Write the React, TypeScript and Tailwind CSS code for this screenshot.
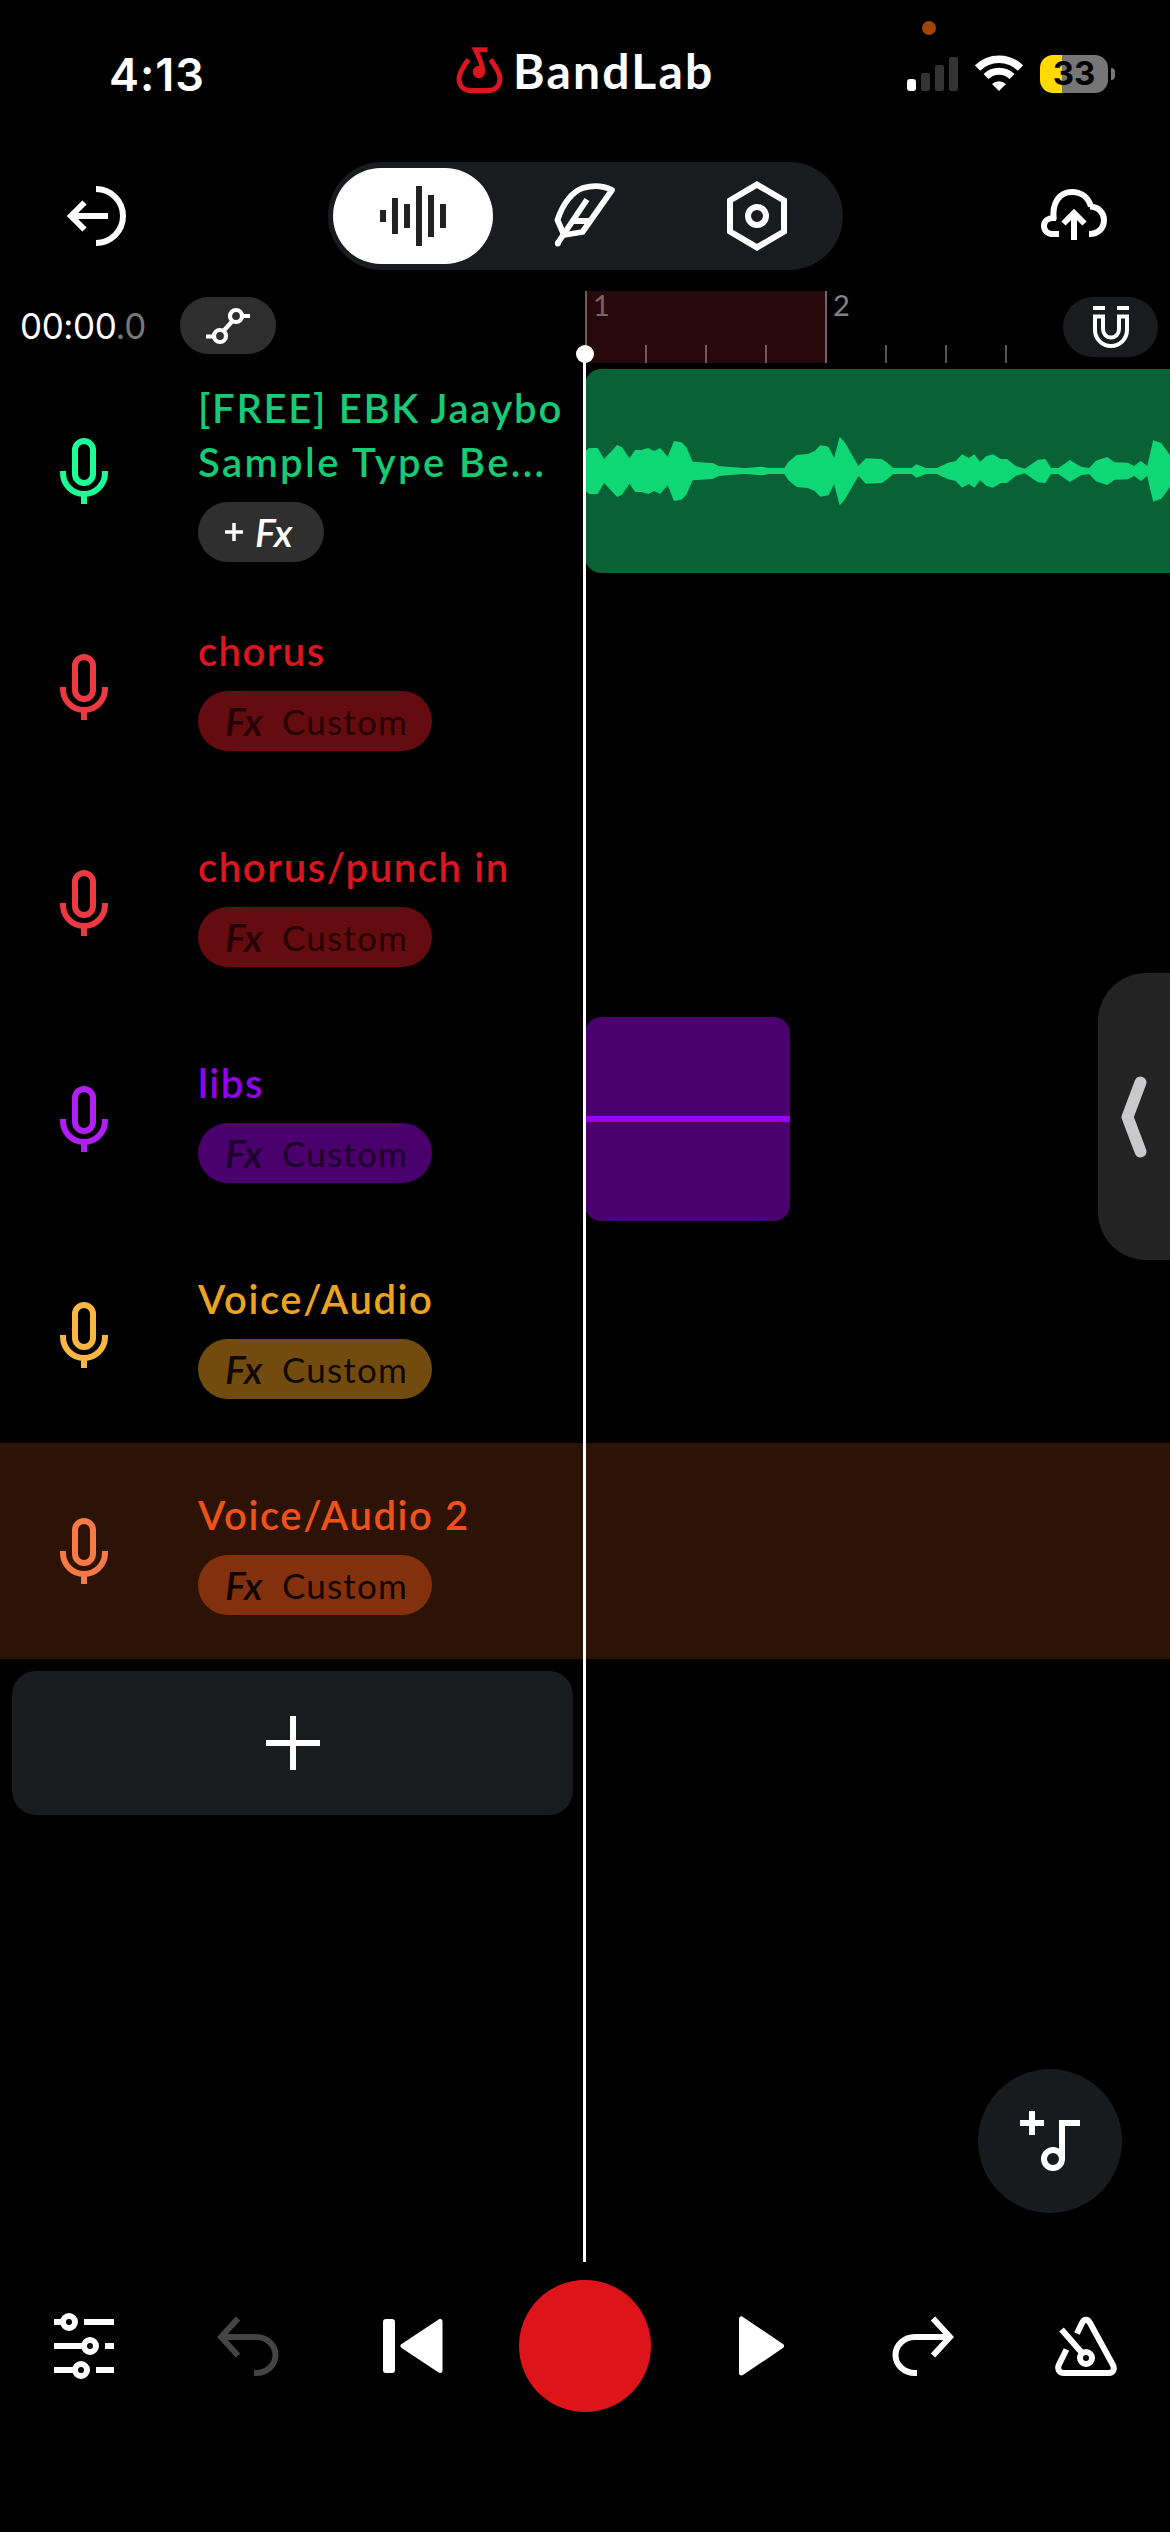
const tracks = [
  { name: "[FREE] EBK Jaaybo", name2: "Sample Type Be...", mic: "text-[#1dff96]", title: "text-[#17ca76] tracking-[1.7px]", fx: null, row: "" },
  { name: "chorus", mic: "text-[#ec3a42]", title: "text-[#dd151f] tracking-[1.4px]", fx: "bg-[#640c10] text-[#250204]", row: "" },
  { name: "chorus/punch in", mic: "text-[#ec3a42]", title: "text-[#dd151f] tracking-[1.6px]", fx: "bg-[#640c10] text-[#250204]", row: "" },
  { name: "libs", mic: "text-[#b01ff8]", title: "text-[#9500f2] tracking-[1.6px]", fx: "bg-[#4a006d] text-[#1b0029]", row: "" },
  { name: "Voice/Audio", mic: "text-[#f9b642]", title: "text-[#eca322] tracking-[1.6px]", fx: "bg-[#724c0e] text-[#120a02]", row: "" },
  { name: "Voice/Audio 2", mic: "text-[#f57a45]", title: "text-[#ee5219] tracking-[1.6px]", fx: "bg-[#83310d] text-[#120501]", row: "bg-[#2c1306]" },
]

// x position and half height of the waveform envelope
const wave = [
  [4, 58], [15, 69], [38, 69], [55, 36], [90, 78], [103, 71], [123, 38], [138, 63], [155, 63], [173, 69], [188, 60], [205, 69],
  [225, 43], [242, 90], [262, 86], [275, 71], [292, 28], [345, 24], [362, 15], [385, 13], [430, 9], [478, 13], [495, 9], [537, 9],
  [548, 28], [570, 48], [600, 51], [618, 60], [633, 77], [655, 73], [670, 40], [685, 103], [700, 83], [735, 15], [755, 38], [797, 36],
  [812, 25], [828, 9], [877, 9], [890, 20], [915, 9], [945, 9], [975, 25], [995, 30], [1012, 50], [1030, 39], [1045, 50], [1060, 28],
  [1078, 45], [1095, 50], [1115, 36], [1132, 36], [1155, 15], [1180, 7], [1215, 34], [1235, 36], [1250, 9], [1270, 9], [1300, 33],
  [1330, 13], [1352, 9], [1370, 31], [1400, 42], [1420, 26], [1455, 25], [1472, 15], [1490, 30], [1507, 15], [1523, 92], [1545, 83], [1568, 48],
]

const wavePoints = [
  ...wave.map(([x, h]) => `${x},${306 - h}`),
  ...[...wave].reverse().map(([x, h]) => `${x},${306 + h}`),
].join(" ")

function StatusBar() {
  return (
    <div className="relative flex h-[162px] items-start">
      <div className="w-[328px] pt-12 pl-[109px] font-[Inter] text-[45px] leading-[54px] font-semibold tracking-[1px]">4:13</div>
      <div className="flex w-[514px] items-start pl-[128px]">
        <svg className="mt-[46px] h-12 w-12 text-[#dd151f]" viewBox="0 0 48 48" fill="none" stroke="currentColor">
          <path d="M12.5 13.5 C7 21 3 27 3 32.500 C3 40 8 44.500 15.500 44.500 H31.500 C39 44.500 44 40 44 32.500 C44 27 40 21 34.500 13.500" strokeWidth="5" />
          <path d="M31.500 3.800 H19.500 C22.500 10 26.500 17 27 27" strokeWidth="5" />
          <circle cx="23" cy="26" r="6.200" fill="currentColor" stroke="none" />
        </svg>
        <div className="ml-[9px] mt-[42px] text-[48px] leading-[58px] font-bold tracking-[2.200px] whitespace-nowrap">BandLab</div>
      </div>
      <div className="flex items-start pl-[65px]">
        <svg className="mt-[55px] h-9 w-[51px]" viewBox="0 0 51 36">
          <rect x="0" y="24" width="9" height="12" rx="3" fill="#fff" />
          <rect x="14" y="18" width="9" height="18" rx="2" fill="#333" />
          <rect x="28" y="10" width="9" height="26" rx="2" fill="#333" />
          <rect x="42" y="2" width="9" height="34" rx="2" fill="#333" />
        </svg>
        <svg className="mt-[55px] ml-[17px] h-9 w-12" viewBox="0 0 48 36" fill="none" stroke="#fff">
          <path d="M2.500 13 A30.500 30.500 0 0 1 45.500 13" strokeWidth="7.500" />
          <path d="M11 21.500 A18.500 18.500 0 0 1 37 21.500" strokeWidth="7" />
          <path d="M17 29 A10 10 0 0 1 31 29 L24 36 Z" fill="#fff" stroke="none" />
        </svg>
        <div className="mt-[55px] ml-[17px] flex h-[38px] w-[68px] items-center justify-center rounded-[13px] bg-linear-to-r from-[#ffd900] from-33% to-[#767676] to-33% font-[Inter] text-[33px] font-bold text-black">33</div>
        <div className="mt-[68px] ml-[3px] h-3 w-1 rounded-r-full bg-[#767676]" />
      </div>
      <div className="absolute top-[21px] left-[922px] h-[14px] w-[14px] rounded-full bg-[#a04408]" />
    </div>
  )
}

function Header() {
  return (
    <div className="flex h-[108px] items-center">
      <svg className="ml-[66px] h-[60px] w-[60px]" viewBox="0 0 60 60" fill="none" stroke="#fff" strokeWidth="6">
        <path d="M30 3 A27 27 0 0 1 30 57" />
        <path d="M42 30 H4 M18.500 16.500 L5 30 L18.500 43.500" />
      </svg>
      <div className="ml-[202px] flex h-[108px] w-[515px] items-center rounded-full bg-[#1a1b1e] pl-[5px]">
        <div className="flex h-24 w-40 items-center justify-center rounded-full bg-white">
          <svg className="h-[60px] w-[66px]" viewBox="0 0 66 60" fill="#222">
            <rect x="0" y="24" width="6" height="12" />
            <rect x="12" y="12" width="6" height="36" />
            <rect x="24" y="18" width="6" height="24" />
            <rect x="36" y="0" width="6" height="60" />
            <rect x="48" y="9" width="6" height="42" />
            <rect x="60" y="18" width="6" height="24" />
          </svg>
        </div>
        <svg className="ml-[61px] h-[66px] w-[62px]" viewBox="0 0 62 66" fill="none" stroke="#fff" strokeWidth="5.800" strokeLinejoin="round">
          <path d="M10 52 L3.500 37 C9 20 19 8 29 5 C39 2.200 50 3 58 7 L28.500 49 Z" />
          <path d="M3.500 60.500 L33 16.500 M19 38 H37" />
          <circle cx="3.800" cy="60.500" r="2.900" fill="#fff" stroke="none" />
        </svg>
        <svg className="ml-[111px] h-[70px] w-[60px]" viewBox="0 0 60 70" fill="none" stroke="#fff" strokeWidth="6">
          <path d="M30 3.600 L57 19.500 V50.500 L30 66.400 L3 50.500 V19.500 Z" />
          <circle cx="30" cy="35" r="9" />
        </svg>
      </div>
      <svg className="ml-[198px] h-[54px] w-[66px]" viewBox="0 0 66 54" fill="none" stroke="#fff" strokeWidth="6">
        <path d="M18 45 H12 C6.500 45 3 41.500 3 37 C3 32 7 29 12.500 29 H15 M12.800 31 C10.500 13 19 3 31 3 C41 3 47.500 9 50 17.500 H49 C58 18 63 24 63 31 C63 39 57.500 45 48 45" />
        <path d="M33 51 V25 M22.500 34.500 L33 24 L43.500 34.500" />
      </svg>
    </div>
  )
}

function Ruler() {
  return (
    <div className="mt-[21px] flex h-[72px]">
      <div className="flex w-[585px] pl-5">
        <div className="mt-1.5 w-40 font-[Inter] text-[35px] leading-[58px] tracking-[-0.4px] whitespace-nowrap">
          00:00<span className="text-[#777]">.0</span>
        </div>
        <div className="mt-1.5 flex h-[57px] w-24 items-center justify-center rounded-full bg-[#2e2e2e]">
          <svg className="h-10 w-11" viewBox="0 0 44 40" fill="none" stroke="#fff" strokeWidth="4.200">
            <circle cx="30" cy="10" r="6" />
            <circle cx="14" cy="30" r="6" />
            <path d="M36 10 H44 M0 30.500 H8 M26.500 15 L17.500 25" />
          </svg>
        </div>
      </div>
      <div className="flex flex-1 items-end">
        <div className="flex h-[72px] w-[240px] items-end border-l-2 border-[#73575a] bg-[#28090b]">
          <div className="w-[58px] self-start pl-1.5 text-[29px] leading-[28px] text-[#7f6365]">1</div>
          <div className="h-[18px] w-[60px] border-l-2 border-[#73575a]" />
          <div className="h-[18px] w-[60px] border-l-2 border-[#73575a]" />
          <div className="h-[18px] border-l-2 border-[#73575a]" />
        </div>
        <div className="flex h-[72px] w-[238px] items-end border-l-2 border-[#6f6567]">
          <div className="w-[58px] self-start pl-1.5 text-[29px] leading-[28px] text-[#848484]">2</div>
          <div className="h-[18px] w-[60px] border-l-2 border-[#555]" />
          <div className="h-[18px] w-[60px] border-l-2 border-[#555]" />
          <div className="h-[18px] border-l-2 border-[#555]" />
        </div>
        <div className="mb-1.5 flex h-[60px] w-[95px] items-center justify-center rounded-full bg-[#1a1b1d]">
          <svg className="h-[42px] w-9" viewBox="0 0 36 42" fill="none" stroke="#fff" strokeWidth="4">
            <path d="M0 2 H12 M24 2 H36" />
            <path d="M2 10.500 H10 V23 A8 8.500 0 0 0 26 23 V10.500 H34 V24 A16 16 0 0 1 2 24 Z" />
          </svg>
        </div>
      </div>
    </div>
  )
}

function Mic({ color }: { color: string }) {
  return (
    <svg className={`h-[66px] w-12 ${color}`} viewBox="0 0 48 66" fill="none" stroke="currentColor" strokeWidth="6">
      <rect x="15" y="3" width="18" height="42" rx="9" />
      <path d="M3 33 V35 A21 21 0 0 0 45 35 V33 M24 56 V66" />
    </svg>
  )
}

function TrackRow({ track }: { track: any }) {
  return (
    <div className={`flex h-[216px] items-center ${track.row}`}>
      <div className="flex w-[585px] items-center">
        <div className="flex w-[198px] pl-[60px]">
          <Mic color={track.mic} />
        </div>
        <div>
          <p className={`pt-px text-[40px] leading-[54px] font-semibold whitespace-nowrap ${track.title}`}>
            {track.name}
            {track.name2 && <><br /><span className="tracking-[2.400px]">{track.name2}</span></>}
          </p>
          {track.fx ? (
            <div className={`mt-[13px] flex h-[60px] w-[234px] items-center rounded-full pl-[27px] ${track.fx}`}>
              <span className="w-[57px] text-[39px] leading-[50px] font-semibold italic">Fx</span>
              <span className="text-[35px] leading-[50px] tracking-[1.2px]">Custom</span>
            </div>
          ) : (
            <div className="mt-[13px] flex h-[60px] w-[126px] items-center rounded-full bg-[#2f2f2f] pl-[27px] text-white">
              <svg className="mr-3 h-[18px] w-[18px]" viewBox="0 0 18 18" stroke="#fff" strokeWidth="3.500">
                <path d="M9 0 V18 M0 9 H18" />
              </svg>
              <span className="text-[39px] leading-[50px] font-semibold italic">Fx</span>
            </div>
          )}
        </div>
      </div>
      {track.name2 && (
        <div className="h-[204px] flex-1 overflow-hidden rounded-l-[16px] bg-[#086236]">
          <svg className="h-full w-full" viewBox="4 0 1564 612" preserveAspectRatio="none">
            <polygon points={wavePoints} fill="#10d775" />
          </svg>
        </div>
      )}
      {track.name === "libs" && (
        <div className="flex h-[204px] w-[205px] items-center rounded-[16px] bg-[#4a006d]">
          <div className="h-1.5 w-full bg-[#9900f5]" />
        </div>
      )}
    </div>
  )
}

function Transport() {
  return (
    <div className="flex h-[132px] items-center">
      <svg className="ml-[54px] h-[66px] w-[60px]" viewBox="0 0 60 66" fill="none" stroke="#fff" strokeWidth="6">
        <circle cx="15" cy="9" r="6" />
        <circle cx="36" cy="33" r="6" />
        <circle cx="27" cy="57" r="6" />
        <path d="M0 9 H9 M30 9 H60 M0 33 H30 M51 33 H60 M0 57 H21 M42 57 H60" />
      </svg>
      <svg className="ml-[103px] h-[60px] w-[62px]" viewBox="0 0 62 60" fill="none" stroke="#444" strokeWidth="6">
        <path d="M21 2.500 L4 21 L21 39.500 M5 21 H39 A19.500 18 0 0 1 39 57 H37" />
      </svg>
      <svg className="ml-[104px] h-[56px] w-[60px]" viewBox="0 0 60 56" fill="#fff">
        <rect x="0" y="1" width="12" height="54" rx="3" />
        <path d="M20 28 L57 3.500 V52.500 Z" stroke="#fff" strokeWidth="5" strokeLinejoin="round" />
      </svg>
      <div className="ml-[76px] h-[132px] w-[132px] rounded-full bg-[#dd151b]" />
      <svg className="ml-[88px] h-[60px] w-[45px]" viewBox="0 0 45 60" fill="#fff">
        <path d="M2.500 3 V57 L42.500 30 Z" stroke="#fff" strokeWidth="5" strokeLinejoin="round" />
      </svg>
      <svg className="ml-[108px] h-[60px] w-[62px]" viewBox="0 0 62 60" fill="none" stroke="#fff" strokeWidth="6">
        <path d="M41 2.500 L58 21 L41 39.500 M57 21 H23 A19.500 18 0 0 0 23 57 H25" />
      </svg>
      <svg className="ml-[101px] h-[60px] w-[62px]" viewBox="0 0 62 60" fill="none" stroke="#fff" strokeWidth="6">
        <path d="M22 17.500 L27 7 C29 2.500 33 2.500 35 7 L58 49 C60 53.500 58 57 54 57 H9 C4 57 2 53 4 48.500 L11.500 33.500" />
        <path d="M6.500 13.500 L27.500 37.500" />
        <circle cx="31" cy="42" r="6" />
      </svg>
    </div>
  )
}

export default function App() {
  return (
    <div className="relative h-[2532px] w-[1170px] overflow-hidden bg-black font-[Lato,sans-serif] text-white">
      <StatusBar />
      <Header />
      <Ruler />

      {/* Tracks */}
      {tracks.map((track, i) => (
        <TrackRow key={i} track={track} />
      ))}
      <div className="mt-3 ml-3 flex h-36 w-[561px] items-center justify-center rounded-[24px] bg-[#1a1b1d]">
        <svg className="h-[54px] w-[54px]" viewBox="0 0 54 54" stroke="#fff" strokeWidth="6">
          <path d="M27 0 V54 M0 27 H54" />
        </svg>
      </div>

      <div className="h-[465px]" />
      <Transport />

      {/* Playhead */}
      <div className="absolute top-[354px] left-[583px] h-[1908px] w-[3px] bg-white" />
      <div className="absolute top-[345px] left-[576px] h-[18px] w-[18px] rounded-full bg-white" />

      {/* Side handle */}
      <div className="absolute top-[973px] left-[1098px] flex h-[287px] w-[72px] items-center rounded-l-[48px] bg-[#232323] pl-[23px]">
        <svg className="h-[82px] w-[26px]" viewBox="0 0 26 82" fill="none" stroke="#c9c9cc" strokeWidth="12" strokeLinecap="round" strokeLinejoin="round">
          <path d="M19.500 6.500 L6.500 41 L19.500 75.500" />
        </svg>
      </div>

      {/* Add loop button */}
      <div className="absolute top-[2069px] left-[978px] flex h-36 w-36 items-center justify-center rounded-full bg-[#181b1d]">
        <svg className="h-[60px] w-[60px]" viewBox="0 0 60 60" fill="none" stroke="#fff" strokeWidth="6">
          <path d="M12 0 V24 M0 12 H24 M42 48 V12 H60" />
          <circle cx="33" cy="48" r="9" />
        </svg>
      </div>
    </div>
  )
}
